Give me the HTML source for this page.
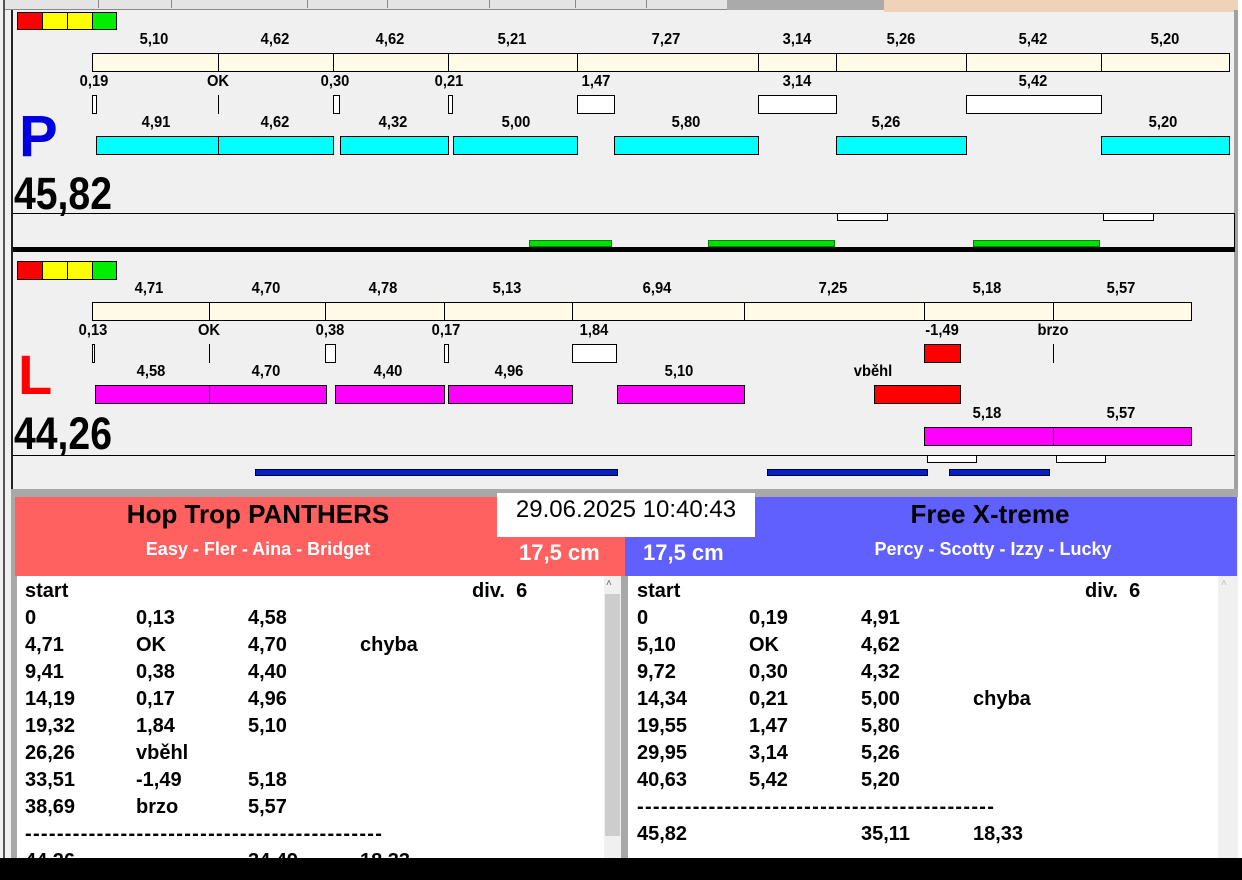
<!DOCTYPE html>
<html><head><meta charset="utf-8"><style>
*{margin:0;padding:0;box-sizing:border-box}
body{width:1242px;height:880px;position:relative;overflow:hidden;background:#f0f0f0;font-family:"Liberation Sans",sans-serif}
div{position:absolute}
.l{font-weight:bold;font-size:16px;color:#000;transform:translateX(-50%) scaleX(0.92);line-height:16px;white-space:nowrap}
.b{border:1px solid #000}
.c{background:#fffbe6}
.cy{background:#00ffff}
.m{background:#ff00ff}
.w{background:#fff}
.r{background:#ff0000}
.t{font-weight:bold;font-size:20px;line-height:27px;white-space:pre;color:#000}
.big{font-weight:bold;font-size:45px;line-height:45px;transform:scaleX(0.87);transform-origin:left top}
</style></head><body>
<div style="left:0;top:0;width:884px;height:10px;background:#e4e4e4;border-bottom:1px solid #888"></div>
<div style="left:727px;top:0;width:157px;height:10px;background:#aaa"></div>
<div style="left:884px;top:0;width:354px;height:12px;background:#efd3b8"></div>
<div style="left:98px;top:0;width:1px;height:8px;background:#888"></div>
<div style="left:171px;top:0;width:1px;height:8px;background:#888"></div>
<div style="left:307px;top:0;width:1px;height:8px;background:#888"></div>
<div style="left:387px;top:0;width:1px;height:8px;background:#888"></div>
<div style="left:489px;top:0;width:1px;height:8px;background:#888"></div>
<div style="left:575px;top:0;width:1px;height:8px;background:#888"></div>
<div style="left:646px;top:0;width:1px;height:8px;background:#888"></div>
<div style="left:0;top:0;width:3px;height:880px;background:#f0f0f0"></div>
<div style="left:3px;top:0;width:2px;height:880px;background:#555"></div>
<div style="left:11px;top:10px;width:2px;height:480px;background:#222"></div>
<div style="left:1234px;top:10px;width:4px;height:485px;background:#a0a0a0"></div>
<div style="left:1238px;top:0;width:4px;height:880px;background:#fff"></div>

<div class="b" style="left:17px;top:12px;width:26px;height:18px;background:#f00"></div>
<div class="b" style="left:42px;top:12px;width:26px;height:18px;background:#ff0"></div>
<div class="b" style="left:67px;top:12px;width:26px;height:18px;background:#ff0"></div>
<div class="b" style="left:92px;top:12px;width:25px;height:18px;background:#0e0"></div>

<div class="l" style="left:154px;top:32px">5,10</div>
<div class="l" style="left:275px;top:32px">4,62</div>
<div class="l" style="left:390px;top:32px">4,62</div>
<div class="l" style="left:512px;top:32px">5,21</div>
<div class="l" style="left:666px;top:32px">7,27</div>
<div class="l" style="left:797px;top:32px">3,14</div>
<div class="l" style="left:901px;top:32px">5,26</div>
<div class="l" style="left:1033px;top:32px">5,42</div>
<div class="l" style="left:1165px;top:32px">5,20</div>

<div class="b c" style="left:92px;top:53px;width:127px;height:19px"></div>
<div class="b c" style="left:218px;top:53px;width:116px;height:19px"></div>
<div class="b c" style="left:333px;top:53px;width:116px;height:19px"></div>
<div class="b c" style="left:448px;top:53px;width:130px;height:19px"></div>
<div class="b c" style="left:577px;top:53px;width:182px;height:19px"></div>
<div class="b c" style="left:758px;top:53px;width:79px;height:19px"></div>
<div class="b c" style="left:836px;top:53px;width:131px;height:19px"></div>
<div class="b c" style="left:966px;top:53px;width:136px;height:19px"></div>
<div class="b c" style="left:1101px;top:53px;width:129px;height:19px"></div>

<div class="l" style="left:94px;top:74px">0,19</div>
<div class="l" style="left:218px;top:74px">OK</div>
<div class="l" style="left:335px;top:74px">0,30</div>
<div class="l" style="left:449px;top:74px">0,21</div>
<div class="l" style="left:596px;top:74px">1,47</div>
<div class="l" style="left:797px;top:74px">3,14</div>
<div class="l" style="left:1033px;top:74px">5,42</div>

<div class="b w" style="left:92px;top:95px;width:5px;height:19px"></div>
<div style="left:218px;top:95px;width:1px;height:19px;background:#000"></div>
<div class="b w" style="left:333px;top:95px;width:7px;height:19px"></div>
<div class="b w" style="left:448px;top:95px;width:5px;height:19px"></div>
<div class="b w" style="left:577px;top:95px;width:38px;height:19px"></div>
<div class="b w" style="left:758px;top:95px;width:79px;height:19px"></div>
<div class="b w" style="left:966px;top:95px;width:136px;height:19px"></div>

<div style="left:19px;top:108px;font-weight:bold;font-size:58px;color:#0000e0;line-height:58px">P</div>

<div class="l" style="left:156px;top:115px">4,91</div>
<div class="l" style="left:275px;top:115px">4,62</div>
<div class="l" style="left:393px;top:115px">4,32</div>
<div class="l" style="left:516px;top:115px">5,00</div>
<div class="l" style="left:686px;top:115px">5,80</div>
<div class="l" style="left:886px;top:115px">5,26</div>
<div class="l" style="left:1163px;top:115px">5,20</div>

<div class="b cy" style="left:96px;top:136px;width:123px;height:19px"></div>
<div class="b cy" style="left:218px;top:136px;width:116px;height:19px"></div>
<div class="b cy" style="left:340px;top:136px;width:109px;height:19px"></div>
<div class="b cy" style="left:453px;top:136px;width:125px;height:19px"></div>
<div class="b cy" style="left:614px;top:136px;width:145px;height:19px"></div>
<div class="b cy" style="left:836px;top:136px;width:131px;height:19px"></div>
<div class="b cy" style="left:1101px;top:136px;width:129px;height:19px"></div>

<div class="big" style="left:14px;top:171px">45,82</div>

<div style="left:13px;top:213px;width:1222px;height:1px;background:#000"></div>
<div style="left:1234px;top:213px;width:1px;height:34px;background:#000"></div>
<div class="b w" style="left:837px;top:213px;width:51px;height:8px"></div>
<div class="b w" style="left:1103px;top:213px;width:51px;height:8px"></div>
<div style="left:529px;top:240px;width:83px;height:7px;background:#00e000;border:1px solid #080"></div>
<div style="left:708px;top:240px;width:127px;height:7px;background:#00e000;border:1px solid #080"></div>
<div style="left:973px;top:240px;width:127px;height:7px;background:#00e000;border:1px solid #080"></div>
<div style="left:13px;top:247px;width:1222px;height:5px;background:#000"></div>

<div class="b" style="left:17px;top:261px;width:26px;height:19px;background:#f00"></div>
<div class="b" style="left:42px;top:261px;width:26px;height:19px;background:#ff0"></div>
<div class="b" style="left:67px;top:261px;width:26px;height:19px;background:#ff0"></div>
<div class="b" style="left:92px;top:261px;width:25px;height:19px;background:#0e0"></div>

<div class="l" style="left:149px;top:281px">4,71</div>
<div class="l" style="left:266px;top:281px">4,70</div>
<div class="l" style="left:383px;top:281px">4,78</div>
<div class="l" style="left:507px;top:281px">5,13</div>
<div class="l" style="left:657px;top:281px">6,94</div>
<div class="l" style="left:833px;top:281px">7,25</div>
<div class="l" style="left:987px;top:281px">5,18</div>
<div class="l" style="left:1121px;top:281px">5,57</div>

<div class="b c" style="left:92px;top:302px;width:118px;height:19px"></div>
<div class="b c" style="left:209px;top:302px;width:117px;height:19px"></div>
<div class="b c" style="left:325px;top:302px;width:120px;height:19px"></div>
<div class="b c" style="left:444px;top:302px;width:129px;height:19px"></div>
<div class="b c" style="left:572px;top:302px;width:173px;height:19px"></div>
<div class="b c" style="left:744px;top:302px;width:181px;height:19px"></div>
<div class="b c" style="left:924px;top:302px;width:130px;height:19px"></div>
<div class="b c" style="left:1053px;top:302px;width:139px;height:19px"></div>

<div class="l" style="left:93px;top:323px">0,13</div>
<div class="l" style="left:209px;top:323px">OK</div>
<div class="l" style="left:330px;top:323px">0,38</div>
<div class="l" style="left:446px;top:323px">0,17</div>
<div class="l" style="left:594px;top:323px">1,84</div>
<div class="l" style="left:942px;top:323px">-1,49</div>
<div class="l" style="left:1053px;top:323px">brzo</div>

<div class="b w" style="left:92px;top:344px;width:3px;height:19px"></div>
<div style="left:209px;top:344px;width:1px;height:19px;background:#000"></div>
<div class="b w" style="left:325px;top:344px;width:11px;height:19px"></div>
<div class="b w" style="left:444px;top:344px;width:5px;height:19px"></div>
<div class="b w" style="left:572px;top:344px;width:45px;height:19px"></div>
<div class="b r" style="left:924px;top:344px;width:37px;height:19px"></div>
<div style="left:1053px;top:344px;width:1px;height:19px;background:#000"></div>

<div style="left:18px;top:347px;font-weight:bold;font-size:56px;color:#f00;line-height:56px">L</div>

<div class="l" style="left:151px;top:364px">4,58</div>
<div class="l" style="left:266px;top:364px">4,70</div>
<div class="l" style="left:388px;top:364px">4,40</div>
<div class="l" style="left:509px;top:364px">4,96</div>
<div class="l" style="left:679px;top:364px">5,10</div>
<div class="l" style="left:873px;top:364px">vběhl</div>

<div class="b m" style="left:95px;top:385px;width:115px;height:19px"></div>
<div class="b m" style="left:209px;top:385px;width:118px;height:19px"></div>
<div class="b m" style="left:335px;top:385px;width:110px;height:19px"></div>
<div class="b m" style="left:448px;top:385px;width:125px;height:19px"></div>
<div class="b m" style="left:617px;top:385px;width:128px;height:19px"></div>
<div class="b r" style="left:874px;top:385px;width:87px;height:19px"></div>

<div class="l" style="left:987px;top:406px">5,18</div>
<div class="l" style="left:1121px;top:406px">5,57</div>
<div class="b m" style="left:924px;top:427px;width:130px;height:19px"></div>
<div class="b m" style="left:1053px;top:427px;width:139px;height:19px"></div>

<div class="big" style="left:14px;top:411px">44,26</div>

<div style="left:13px;top:455px;width:1222px;height:1px;background:#000"></div>
<div class="b w" style="left:927px;top:455px;width:50px;height:8px"></div>
<div class="b w" style="left:1056px;top:455px;width:50px;height:8px"></div>
<div style="left:255px;top:469px;width:363px;height:7px;background:#0020c8;border:1px solid #002"></div>
<div style="left:767px;top:469px;width:161px;height:7px;background:#0020c8;border:1px solid #002"></div>
<div style="left:949px;top:469px;width:101px;height:7px;background:#0020c8;border:1px solid #002"></div>

<div style="left:11px;top:489px;width:1227px;height:8px;background:#a8a8a8"></div>
<div style="left:11px;top:497px;width:6px;height:361px;background:#a8a8a8"></div>
<div style="left:15px;top:497px;width:610px;height:79px;background:#ff6060"></div>
<div style="left:625px;top:497px;width:612px;height:79px;background:#6060ff"></div>
<div style="left:497px;top:493px;width:258px;height:44px;background:#fff"></div>
<div style="left:497px;top:494px;width:258px;text-align:center;font-size:24px;line-height:32px">29.06.2025 10:40:43</div>

<div style="left:15px;top:498px;width:486px;text-align:center;font-weight:bold;font-size:26px;line-height:32px">Hop Trop PANTHERS</div>
<div style="left:15px;top:537px;width:486px;text-align:center;font-weight:bold;font-size:18px;line-height:24px;color:#fff">Easy - Fler - Aina - Bridget</div>
<div style="left:519px;top:538px;font-weight:bold;font-size:22px;line-height:30px;color:#fff">17,5 cm</div>
<div style="left:755px;top:498px;width:470px;text-align:center;font-weight:bold;font-size:26px;line-height:32px">Free X-treme</div>
<div style="left:755px;top:537px;width:476px;text-align:center;font-weight:bold;font-size:18px;line-height:24px;color:#fff">Percy - Scotty - Izzy - Lucky</div>
<div style="left:643px;top:538px;font-weight:bold;font-size:22px;line-height:30px;color:#fff">17,5 cm</div>

<div style="left:17px;top:576px;width:587px;height:282px;background:#fff"></div>
<div style="left:604px;top:576px;width:17px;height:282px;background:#f0f0f0"></div>
<div style="left:605px;top:594px;width:15px;height:242px;background:#cdcdcd"></div>
<div style="left:606px;top:578px;font-size:10px;color:#666">˄</div>
<div style="left:621px;top:576px;width:7px;height:282px;background:#a8a8a8"></div>
<div style="left:628px;top:576px;width:590px;height:282px;background:#fff"></div>
<div style="left:1218px;top:576px;width:17px;height:282px;background:#f0f0f0"></div>
<div style="left:1221px;top:578px;font-size:10px;color:#bbb">˄</div>

<div class="t" style="left:25px;top:578px;width:580px;height:280px;overflow:hidden">start
0<span style="position:absolute;left:111px">0,13</span><span style="position:absolute;left:223px">4,58</span>
4,71<span style="position:absolute;left:111px">OK</span><span style="position:absolute;left:223px">4,70</span><span style="position:absolute;left:335px">chyba</span>
9,41<span style="position:absolute;left:111px">0,38</span><span style="position:absolute;left:223px">4,40</span>
14,19<span style="position:absolute;left:111px">0,17</span><span style="position:absolute;left:223px">4,96</span>
19,32<span style="position:absolute;left:111px">1,84</span><span style="position:absolute;left:223px">5,10</span>
26,26<span style="position:absolute;left:111px">vběhl</span>
33,51<span style="position:absolute;left:111px">-1,49</span><span style="position:absolute;left:223px">5,18</span>
38,69<span style="position:absolute;left:111px">brzo</span><span style="position:absolute;left:223px">5,57</span>
<span style="letter-spacing:1.3px">---------------------------------------------</span>
44,26<span style="position:absolute;left:223px">34,49</span><span style="position:absolute;left:335px">18,33</span><span style="position:absolute;left:447px;top:0">div.  6</span></div>

<div class="t" style="left:637px;top:578px;width:580px;height:280px;overflow:hidden">start
0<span style="position:absolute;left:112px">0,19</span><span style="position:absolute;left:224px">4,91</span>
5,10<span style="position:absolute;left:112px">OK</span><span style="position:absolute;left:224px">4,62</span>
9,72<span style="position:absolute;left:112px">0,30</span><span style="position:absolute;left:224px">4,32</span>
14,34<span style="position:absolute;left:112px">0,21</span><span style="position:absolute;left:224px">5,00</span><span style="position:absolute;left:336px">chyba</span>
19,55<span style="position:absolute;left:112px">1,47</span><span style="position:absolute;left:224px">5,80</span>
29,95<span style="position:absolute;left:112px">3,14</span><span style="position:absolute;left:224px">5,26</span>
40,63<span style="position:absolute;left:112px">5,42</span><span style="position:absolute;left:224px">5,20</span>
<span style="letter-spacing:1.3px">---------------------------------------------</span>
45,82<span style="position:absolute;left:224px">35,11</span><span style="position:absolute;left:336px">18,33</span><span style="position:absolute;left:448px;top:0">div.  6</span></div>

<div style="left:0;top:858px;width:1242px;height:22px;background:#000"></div>
</body></html>
